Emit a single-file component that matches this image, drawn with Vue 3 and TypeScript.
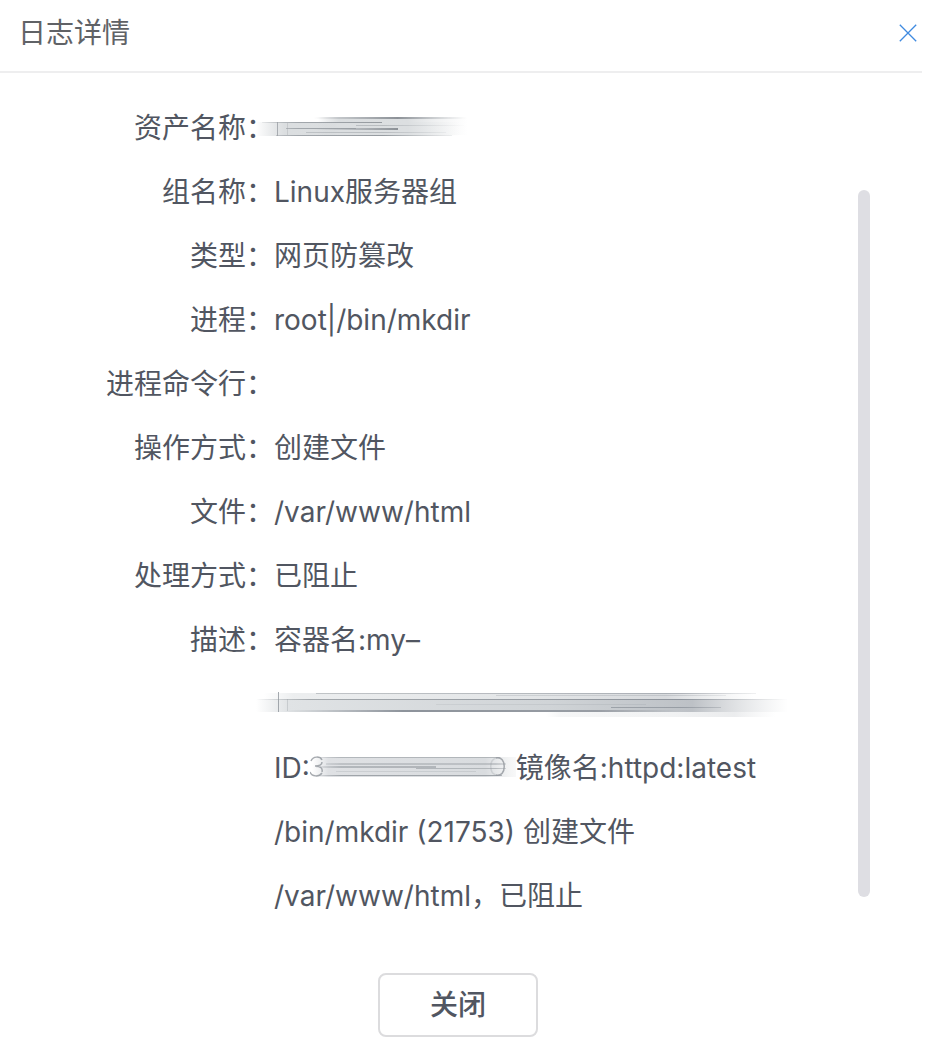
<script setup lang="ts">
import { ref } from 'vue'

interface Field {
  label: string
  value: string
}

const open = ref(true)

const fields: Field[] = [
  { label: '组名称', value: 'Linux服务器组' },
  { label: '类型', value: '网页防篡改' },
  { label: '进程', value: 'root|/bin/mkdir' },
  { label: '进程命令行', value: '' },
  { label: '操作方式', value: '创建文件' },
  { label: '文件', value: '/var/www/html' },
  { label: '处理方式', value: '已阻止' },
]

function close(): void {
  open.value = false
}
</script>

<template>
  <section v-if="open" class="dialog" role="dialog" aria-labelledby="dialog-title">
    <header class="header">
      <h1 id="dialog-title" class="title">日志详情</h1>
      <button class="close" type="button" aria-label="关闭窗口" @click="close">
        <svg width="18" height="18" viewBox="0 0 18 18" fill="none" stroke="#3f8ae0" stroke-width="1.3">
          <path d="M0.8 0.8 17.2 17.2M17.2 0.8 0.8 17.2" />
        </svg>
      </button>
    </header>

    <div class="body">
      <dl class="fields">
        <div class="row">
          <dt>资产名称：</dt>
          <dd>
            <svg class="smudge asset" viewBox="0 0 220 28" aria-hidden="true">
              <defs>
                <linearGradient id="a-fill" x1="0" x2="1">
                  <stop offset="0" stop-color="#d3d6d9" stop-opacity="0" />
                  <stop offset="0.14" stop-color="#dbdee0" />
                  <stop offset="0.6" stop-color="#dcdfe1" />
                  <stop offset="1" stop-color="#e9ebec" stop-opacity="0" />
                </linearGradient>
                <linearGradient id="a-line" gradientUnits="userSpaceOnUse" x1="0" x2="212" y1="0" y2="0">
                  <stop offset="0" stop-color="#949a9f" stop-opacity="0" />
                  <stop offset="0.2" stop-color="#a2a7ac" />
                  <stop offset="0.6" stop-color="#969ba0" />
                  <stop offset="1" stop-color="#b5b9bd" stop-opacity="0" />
                </linearGradient>
                <linearGradient id="a-top" gradientUnits="userSpaceOnUse" x1="58" x2="210" y1="0" y2="0">
                  <stop offset="0" stop-color="#8c9197" stop-opacity="0" />
                  <stop offset="0.55" stop-color="#8c9197" />
                  <stop offset="1" stop-color="#b5b9bd" stop-opacity="0" />
                </linearGradient>
              </defs>
              <rect x="0" y="8" width="204" height="14" fill="url(#a-fill)" />
              <rect x="62" y="3" width="150" height="18" fill="url(#a-fill)" />
              <g class="soft">
                <rect x="58" y="3" width="152" height="2" fill="url(#a-top)" />
                <rect x="6" y="8" width="120" height="1" fill="url(#a-line)" />
                <rect x="36" y="14" width="106" height="2" fill="url(#a-top)" />
                <rect x="30" y="14" width="70" height="1" fill="url(#a-line)" />
                <rect x="20" y="21" width="176" height="1" fill="url(#a-line)" />
                <rect x="100" y="11" width="108" height="1" fill="url(#a-line)" opacity="0.5" />
                <rect x="50" y="18" width="140" height="1" fill="url(#a-line)" opacity="0.5" />
              </g>
              <path d="M21.5 8v14" stroke="#9a9fa4" stroke-width="1" opacity="0.8" />
              <path d="M31.5 9v12" stroke="#9a9fa4" stroke-width="1" opacity="0.3" />
            </svg>
          </dd>
        </div>
        <div v-for="field in fields" :key="field.label" class="row">
          <dt>{{ field.label }}：</dt>
          <dd>{{ field.value }}</dd>
        </div>
        <div class="row">
          <dt>描述：</dt>
          <dd>
            <div class="line">容器名:my–</div>
            <div class="line">
              <svg class="smudge container" viewBox="0 0 540 28" aria-hidden="true">
                <defs>
                  <linearGradient id="b-fill" x1="0" x2="1">
                    <stop offset="0" stop-color="#e0e3e5" stop-opacity="0" />
                    <stop offset="0.06" stop-color="#e0e3e5" />
                    <stop offset="0.55" stop-color="#d0d4d7" />
                    <stop offset="0.82" stop-color="#bdc1c6" />
                    <stop offset="1" stop-color="#d0d3d6" stop-opacity="0" />
                  </linearGradient>
                  <linearGradient id="b-line" gradientUnits="userSpaceOnUse" x1="0" x2="532" y1="0" y2="0">
                    <stop offset="0" stop-color="#a4a9ad" stop-opacity="0" />
                    <stop offset="0.1" stop-color="#a4a9ad" />
                    <stop offset="0.8" stop-color="#8d939b" />
                    <stop offset="1" stop-color="#b5b9bd" stop-opacity="0" />
                  </linearGradient>
                  <linearGradient id="b-base" gradientUnits="userSpaceOnUse" x1="30" x2="420" y1="0" y2="0">
                    <stop offset="0" stop-color="#8d939b" stop-opacity="0" />
                    <stop offset="0.3" stop-color="#8d939b" />
                    <stop offset="0.8" stop-color="#989da4" />
                    <stop offset="1" stop-color="#989da4" stop-opacity="0" />
                  </linearGradient>
                </defs>
                <rect x="8" y="3" width="490" height="6" fill="url(#b-fill)" opacity="0.6" />
                <rect x="0" y="9" width="532" height="13" fill="url(#b-fill)" />
                <rect x="290" y="22" width="230" height="5" fill="url(#b-fill)" opacity="0.3" />
                <g class="soft">
                  <rect x="60" y="3" width="440" height="1" fill="url(#b-line)" opacity="0.6" />
                  <rect x="0" y="9" width="532" height="1" fill="url(#b-line)" />
                  <rect x="30" y="20" width="390" height="2" fill="url(#b-base)" />
                  <rect x="355" y="17" width="110" height="1" fill="url(#b-line)" opacity="0.8" />
                  <rect x="240" y="5" width="230" height="1" fill="url(#b-line)" opacity="0.3" />
                  <rect x="180" y="14" width="210" height="1" fill="url(#b-line)" opacity="0.2" />
                </g>
                <path d="M22.5 2v20" stroke="#90969c" stroke-width="1" opacity="0.8" />
                <path d="M31.5 9v12" stroke="#90969c" stroke-width="1" opacity="0.3" />
              </svg>
            </div>
            <div class="line">
              <span>ID:</span>
              <svg class="smudge identifier" viewBox="0 0 206 28" aria-hidden="true">
                <defs>
                  <linearGradient id="c-fill" x1="0" x2="1">
                    <stop offset="0" stop-color="#dfe1e4" stop-opacity="0" />
                    <stop offset="0.08" stop-color="#dfe1e4" />
                    <stop offset="0.85" stop-color="#d9dcdf" />
                    <stop offset="1" stop-color="#e8eaeb" stop-opacity="0.3" />
                  </linearGradient>
                  <linearGradient id="c-line" gradientUnits="userSpaceOnUse" x1="0" x2="206" y1="0" y2="0">
                    <stop offset="0" stop-color="#9fa4a9" stop-opacity="0" />
                    <stop offset="0.15" stop-color="#9fa4a9" />
                    <stop offset="0.9" stop-color="#9fa4a9" />
                    <stop offset="1" stop-color="#9fa4a9" stop-opacity="0.2" />
                  </linearGradient>
                </defs>
                <rect x="2" y="3" width="204" height="20" fill="url(#c-fill)" />
                <g class="soft" fill="url(#c-line)">
                  <rect x="8" y="3" width="182" height="1" opacity="0.7" />
                  <rect x="16" y="9" width="180" height="2" opacity="0.5" />
                  <rect x="6" y="12" width="120" height="2" opacity="0.7" />
                  <rect x="106" y="14" width="90" height="1" opacity="0.7" />
                  <rect x="26" y="17" width="140" height="1" opacity="0.3" />
                  <rect x="8" y="21" width="184" height="1" />
                </g>
                <g class="soft" fill="none" stroke="#92979d" stroke-width="1.5" opacity="0.8">
                  <path d="M1 7C3 2 10 2 12 6M5 12C10 12 12 11 12 8M5 12C10 12 13 14 12 18M0 18C2 23 9 23 12 19" />
                  <path d="M186 4C197 1 197 24 186 21" />
                  <path d="M186 4C179 6 179 19 186 21" opacity="0.35" />
                </g>
              </svg>
              <span>镜像名:httpd:latest</span>
            </div>
            <div class="line">/bin/mkdir (21753) 创建文件</div>
            <div class="line">/var/www/html，已阻止</div>
          </dd>
        </div>
      </dl>
      <div class="thumb"></div>
    </div>

    <footer class="footer">
      <button class="confirm" type="button" @click="close">关闭</button>
    </footer>
  </section>
</template>

<style>
body {
  background: #fff;
}
</style>

<style scoped>
.dialog {
  margin-right: 14px;
  color: #515661;
  font-family: Inter, "Noto Sans CJK SC", sans-serif;
  font-size: 28px;
  line-height: 64px;
}

.header {
  display: flex;
  align-items: center;
  justify-content: space-between;
  height: 73px;
  padding: 0 5px 5px 18px;
  box-sizing: border-box;
  border-bottom: 2px solid #eeeeef;
}

.title {
  margin: 0;
  color: #606266;
  font-size: 28px;
  font-weight: 400;
}

.close {
  display: flex;
  padding: 0;
  border: 0;
  background: none;
  cursor: pointer;
}

.body {
  display: flex;
  padding-top: 23px;
}

.fields {
  flex: 1;
  min-width: 0;
  margin: 0;
}

.row {
  display: flex;
  min-height: 64px;
}

dt {
  flex: none;
  width: 274px;
  text-align: right;
}

dd {
  flex: 1;
  min-width: 0;
  margin: 0;
  white-space: nowrap;
}

.line {
  display: flex;
  align-items: center;
  height: 64px;
}

.smudge {
  display: block;
  flex: none;
  height: 28px;
}

.soft {
  filter: blur(0.4px);
}

.asset {
  width: 220px;
  margin: 18px 0 0 -18px;
}

.container {
  width: 540px;
  margin-left: -18px;
}

.identifier {
  width: 206px;
}

.thumb {
  flex: none;
  width: 12px;
  margin: 94px 52px 31px 0;
  border-radius: 6px;
  background: #dedee3;
}

.footer {
  display: flex;
  justify-content: center;
  padding: 45px 6px 11px 0;
}

.confirm {
  width: 160px;
  height: 64px;
  padding: 0;
  border: 2px solid #dcdcde;
  border-radius: 8px;
  background: #fff;
  color: #515661;
  font: 500 28px/60px Inter, "Noto Sans CJK SC", sans-serif;
  cursor: pointer;
}
</style>
